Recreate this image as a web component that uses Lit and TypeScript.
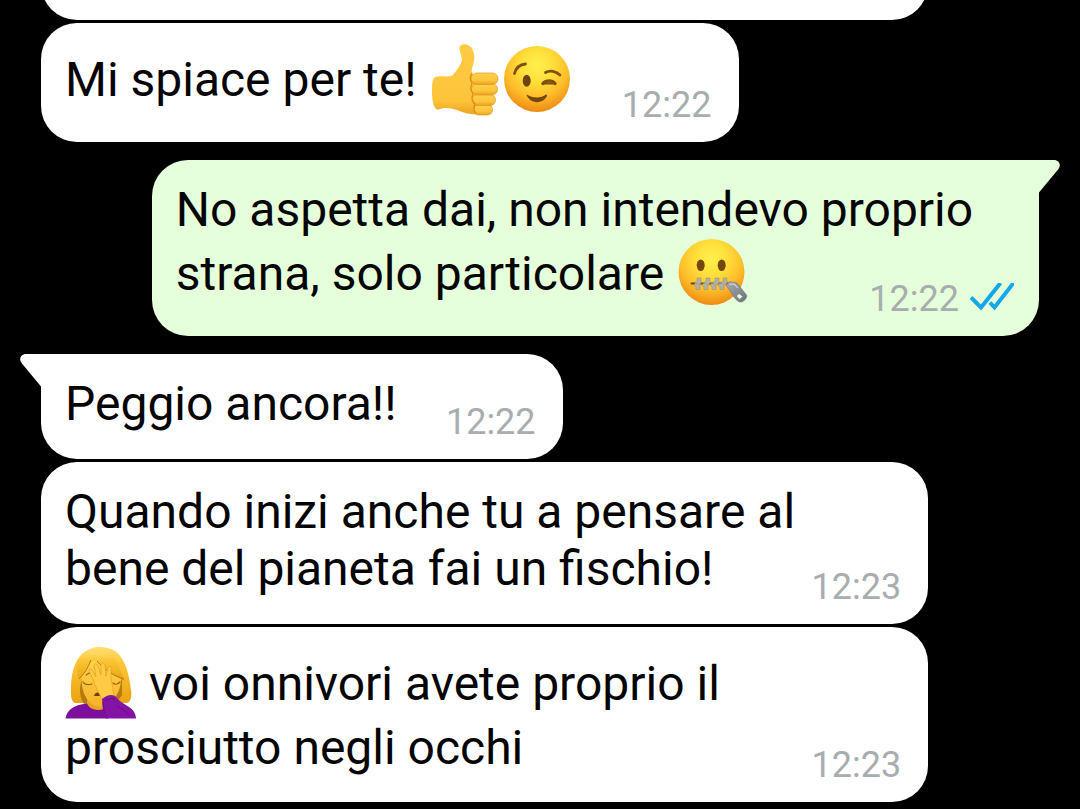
import { LitElement, html, css, svg, nothing } from "lit";
import type { TemplateResult } from "lit";
import { customElement, property } from "lit/decorators.js";

type Emoji = "thumb" | "wink" | "zip" | "palm";

const faceGradient = (id: string) => svg`
  <radialGradient id=${id} cx="50%" cy="30%" r="70%">
    <stop offset="0" stop-color="#fff04e"></stop>
    <stop offset="0.35" stop-color="#ffdf3a"></stop>
    <stop offset="0.68" stop-color="#fdbd2a"></stop>
    <stop offset="1" stop-color="#ee8a14"></stop>
  </radialGradient>`;

const drawings: Record<Emoji, { label: string; art: TemplateResult<2> }> = {
  thumb: {
    label: "pollice in su",
    art: svg`
      <defs>
        <linearGradient id="hand" x1="0" y1="0" x2="0" y2="1">
          <stop offset="0" stop-color="#ffcb45"></stop>
          <stop offset="0.8" stop-color="#fdc43a"></stop>
          <stop offset="1" stop-color="#eda320"></stop>
        </linearGradient>
        <linearGradient id="finger" x1="0" y1="0" x2="0" y2="1">
          <stop offset="0" stop-color="#ffd04a"></stop>
          <stop offset="0.65" stop-color="#fdc43a"></stop>
          <stop offset="1" stop-color="#eaa01e"></stop>
        </linearGradient>
      </defs>
      <path fill="url(#hand)" d="M6 33C12 31 19 34 24 31C28 26 32 21 33 16C33 11 29 5 31 2C34-1 39 0 42 3C45 7 46 12 45 17C44 22 42 26 43 30L62 31L62 65C59 71 53 71 47 70.500C38 70 33 68 28 66C22 64 16 63 10 65.500C5 67 3 57 3 49C3 41 3 35 6 33Z"></path>
      <g fill="url(#finger)" stroke="#dc9a20" stroke-width="0.7">
        <rect x="45" y="60.5" width="18.5" height="10.5" rx="5"></rect>
        <rect x="43" y="50.5" width="23.5" height="11" rx="5.4"></rect>
        <rect x="42.5" y="39.5" width="26" height="11.5" rx="5.6"></rect>
        <rect x="42" y="29" width="27" height="11.5" rx="5.6"></rect>
      </g>
      <path fill="none" stroke="#d98f18" stroke-width="1.2" stroke-linecap="round" d="M43 29C40 33 41 36 43 39C41 43 42 47 44 50C42 54 43 57 46 60C44 64 45 67 47 69"></path>`,
  },
  wink: {
    label: "occhiolino",
    art: svg`
      <defs>${faceGradient("winkFace")}</defs>
      <circle cx="36" cy="35" r="33" fill="url(#winkFace)"></circle>
      <g fill="none" stroke="#80500f" stroke-width="2.8" stroke-linecap="round">
        <path d="M13.500 29.500C15 24 19 20.500 24.500 20"></path>
        <path d="M44.500 28.500C49 26 55 27 59 31"></path>
        <path stroke-width="3.4" d="M42 39.500C45 36 51 36 54 39.500"></path>
        <path stroke-width="2" d="M43 39.500H53"></path>
      </g>
      <ellipse cx="25.700" cy="36.700" rx="4" ry="6" fill="#6f430c"></ellipse>
      <path fill="#74460d" d="M26 50.500C30 54 40 55 45 50.500C46.500 50.500 46 52 45.500 53C41 60 31 59.500 27 53.500C26 52 25 50.500 26 50.500Z"></path>`,
  },
  zip: {
    label: "bocca chiusa con cerniera",
    art: svg`
      <defs>
        ${faceGradient("zipFace")}
        <linearGradient id="steel" x1="0" y1="0" x2="1" y2="1">
          <stop offset="0" stop-color="#a9abb0"></stop>
          <stop offset="1" stop-color="#6d7178"></stop>
        </linearGradient>
      </defs>
      <circle cx="35.500" cy="34" r="33" fill="url(#zipFace)"></circle>
      <ellipse cx="24.700" cy="27.300" rx="4" ry="5.800" fill="#74470d"></ellipse>
      <ellipse cx="45.700" cy="27.300" rx="4" ry="5.800" fill="#74470d"></ellipse>
      <path d="M15.500 45.500H55" stroke="#70450f" stroke-width="2" stroke-linecap="round"></path>
      <g fill="#b3b0a8" stroke="#938c7c" stroke-width="0.5">
        <path d="M21 40h4v5l-2 2h-4v-3h2z"></path>
        <path d="M30 40h4v5l-2 2h-4v-3h2z"></path>
        <path d="M39 40h4v5l-2 2h-4v-3h2z"></path>
        <path d="M47 40h4v5l-2 2h-4v-3h2z"></path>
        <path d="M19 45.500h3l2 2v4h-4v-3l-2-1z"></path>
        <path d="M27 45.500h3l2 2v4h-4v-3l-2-1z"></path>
        <path d="M35 45.500h3l2 2v4h-4v-3l-2-1z"></path>
        <path d="M43 45.500h3l2 2v4h-4v-3l-2-1z"></path>
      </g>
      <path fill="url(#steel)" stroke="#74787f" stroke-width="0.6" fill-rule="evenodd" d="M50 47L54 43.500L61 45L70.500 57C71.500 59 69 63 65.500 64C63 64.500 61 63 58 59ZM63 55.500L60.500 58L63.500 61.500L67 58.500Z"></path>
      <path d="M53.500 46.500L58 46L62 50" fill="none" stroke="#c6c8cc" stroke-width="1.500"></path>`,
  },
  palm: {
    label: "donna con la mano sul viso",
    art: svg`
      <defs>
        <linearGradient id="hair" x1="0" y1="0" x2="0" y2="1">
          <stop offset="0" stop-color="#ffdf70"></stop>
          <stop offset="0.3" stop-color="#fcc636"></stop>
          <stop offset="1" stop-color="#e9a210"></stop>
        </linearGradient>
        <linearGradient id="skin" x1="0" y1="0" x2="0" y2="1">
          <stop offset="0" stop-color="#ffd348"></stop>
          <stop offset="1" stop-color="#f6b12a"></stop>
        </linearGradient>
      </defs>
      <path fill="url(#hair)" d="M28 0C31-2 44-1 50 3C60 10 64 25 66 42C67 48 66 54 62 55H10C5 53 6 44 6 38C7 18 13 4 28 0Z"></path>
      <path fill="#a0650b" d="M17 31C14 40 14 48 19 56L50 57L57 47L57 29Z" opacity="0.700"></path>
      <path fill="#e9a221" d="M22 52H43V68H22Z"></path>
      <path fill="url(#skin)" d="M17 27C19 18 26 14 32 13C43 15 55 18 56 28C57 42 49 56 35 59C22 58 15 42 17 27Z"></path>
      <path fill="url(#hair)" d="M26 11C22 22 17 27 13 31L12 12L27 3L50 9L60 33C50 28 41 24 32 13Z"></path>
      <path fill="none" stroke="#b77511" stroke-width="1" d="M26 12C23 20 19 26 14 31M32 13C40 23 50 28 59 31"></path>
      <path fill="none" stroke="#9c620f" stroke-width="1.200" stroke-linecap="round" d="M18 34C20 37 24 37 27 36M48 35C50 37 53 36 55 34M21 27L26 24"></path>
      <path fill="#71400b" d="M29 48C31 43 34 44 36 48Z"></path>
      <path fill="#7d109b" d="M0.500 70.500C2 62 8 57 22 55.500C25 62 32 63 39 61L43 70.500Z"></path>
      <path fill="#ffcb42" stroke="#dd9a22" stroke-width="0.600" stroke-linejoin="round" d="M37 52C34 44 30 39 28 31L24 23C23 21 26 20 27 22L31 29L29 18C29 15 32 15 33 18L36 27L36 17C36 14 39 14 40 17L41 28L43 20C44 17 47 18 46 21L46 31C48 37 47 43 50 50Z"></path>
      <path fill="#8513a4" d="M37 51C42 47 46 46 50 48C53 52 59 56 64 59C69 62 71 67 71 70.500H41C37 64 38 58 37 51Z"></path>
      <path fill="none" stroke="#6a0f86" stroke-width="1" d="M38 54C38 61 40 66 42 70M40 53C44 50 48 50 50 51M52 58C57 61 61 63 64 67"></path>`,
  },
};

@customElement("chat-emoji")
class ChatEmoji extends LitElement {
  @property() name: Emoji = "wink";

  static styles = css`
    :host {
      display: inline-block;
      width: 72px;
      height: 72px;
      margin: -8px 0;
      vertical-align: -12px;
    }
    .art {
      display: block;
      width: 100%;
      height: 100%;
      overflow: visible;
    }
  `;

  render() {
    const { label, art } = drawings[this.name];
    return html`<svg class="art" viewBox="0 0 72 72" role="img" aria-label=${label}>${art}</svg>`;
  }
}

@customElement("chat-bubble")
class ChatBubble extends LitElement {
  @property() time = "";
  @property({ type: Boolean, reflect: true }) sent = false;
  @property({ type: Boolean, reflect: true }) tail = false;

  static styles = css`
    :host {
      position: relative;
      display: block;
      box-sizing: border-box;
      max-width: calc(89% - 1px);
      align-self: flex-start;
      padding: 21px 25px 27px 24px;
      border-radius: 36px;
      background: #fff;
      color: #050505;
      font-size: 48px;
      line-height: 57px;
    }
    :host([sent]) {
      align-self: flex-end;
      background: #e4ffda;
    }
    :host([tail]) {
      border-top-left-radius: 0;
    }
    :host([tail][sent]) {
      border-top-left-radius: 36px;
      border-top-right-radius: 0;
    }
    .text {
      margin: 0;
    }
    /* Keeps the last line clear of the time stamp. */
    .reserve {
      display: inline-block;
      width: 141px;
    }
    .reserve.wide {
      width: 197px;
    }
    .meta {
      position: absolute;
      right: 27px;
      bottom: 17px;
      display: flex;
      align-items: center;
      gap: 11px;
      color: #a8adaf;
      font-size: 36px;
      line-height: 40px;
    }
    :host([sent]) .meta {
      right: 25px;
    }
    .ticks {
      width: 44px;
      height: 32px;
    }
    .tail {
      position: absolute;
      top: 0;
      right: 100%;
      width: 22px;
      height: 33px;
      margin-right: -1px;
      fill: #fff;
    }
    :host([sent]) .tail {
      right: auto;
      left: 100%;
      margin: 0 0 0 -1px;
      fill: #e4ffda;
      transform: scaleX(-1);
    }
  `;

  render() {
    return html`
      ${this.tail
        ? html`<svg class="tail" viewBox="0 0 22 33" aria-hidden="true">
            <path d="M22 0H6C1 0-1.500 5 1.500 9L21 32.500H22Z"></path>
          </svg>`
        : nothing}
      <p class="text"><slot></slot><span class="reserve ${this.sent ? "wide" : ""}"></span></p>
      <div class="meta">
        <time>${this.time}</time>
        ${this.sent
          ? html`<svg class="ticks" viewBox="0 0 44 32" role="img" aria-label="Letto">
              <path
                fill="none"
                stroke="#14a8e8"
                stroke-width="4"
                d="M1 14.500L11 24.500L30.500 0M20 19.500L24.500 24.500L43.500 0"
              ></path>
            </svg>`
          : nothing}
      </div>
    `;
  }
}

@customElement("app-root")
class AppRoot extends LitElement {
  static styles = css`
    :host {
      display: block;
      min-height: 100vh;
      overflow: hidden;
      background: #000;
      font-family: Roboto, "Liberation Sans", sans-serif;
    }
    .thread {
      display: flex;
      flex-direction: column;
      gap: 3px;
      padding: 0 41px 7px;
    }
    .earlier {
      width: calc(89% - 1px);
      height: 72px;
      margin-top: -52px;
      border-radius: 36px;
      background: #fff;
    }
    .turn {
      margin-top: 15px;
    }
    .single {
      padding-top: 25px;
      padding-bottom: 30px;
      line-height: 64px;
    }
    .emoji-last {
      padding-top: 18px;
      padding-bottom: 30px;
      line-height: 64px;
    }
    .emoji-first {
      padding-top: 25px;
      padding-bottom: 22px;
      line-height: 64px;
    }
  `;

  render() {
    return html`
      <main class="thread">
        <div class="earlier"></div>
        <chat-bubble class="single" time="12:22"
          >Mi spiace per te! <chat-emoji name="thumb"></chat-emoji><chat-emoji name="wink"></chat-emoji
        ></chat-bubble>
        <chat-bubble class="turn emoji-last" time="12:22" sent tail
          >No aspetta dai, non intendevo proprio strana, solo particolare <chat-emoji name="zip"></chat-emoji
        ></chat-bubble>
        <chat-bubble class="turn" time="12:22" tail>Peggio ancora!!</chat-bubble>
        <chat-bubble time="12:23">Quando inizi anche tu a pensare al bene del pianeta fai un fischio!</chat-bubble>
        <chat-bubble class="emoji-first" time="12:23"
          ><chat-emoji name="palm"></chat-emoji> voi onnivori avete proprio il prosciutto negli occhi</chat-bubble
        >
      </main>
    `;
  }
}
